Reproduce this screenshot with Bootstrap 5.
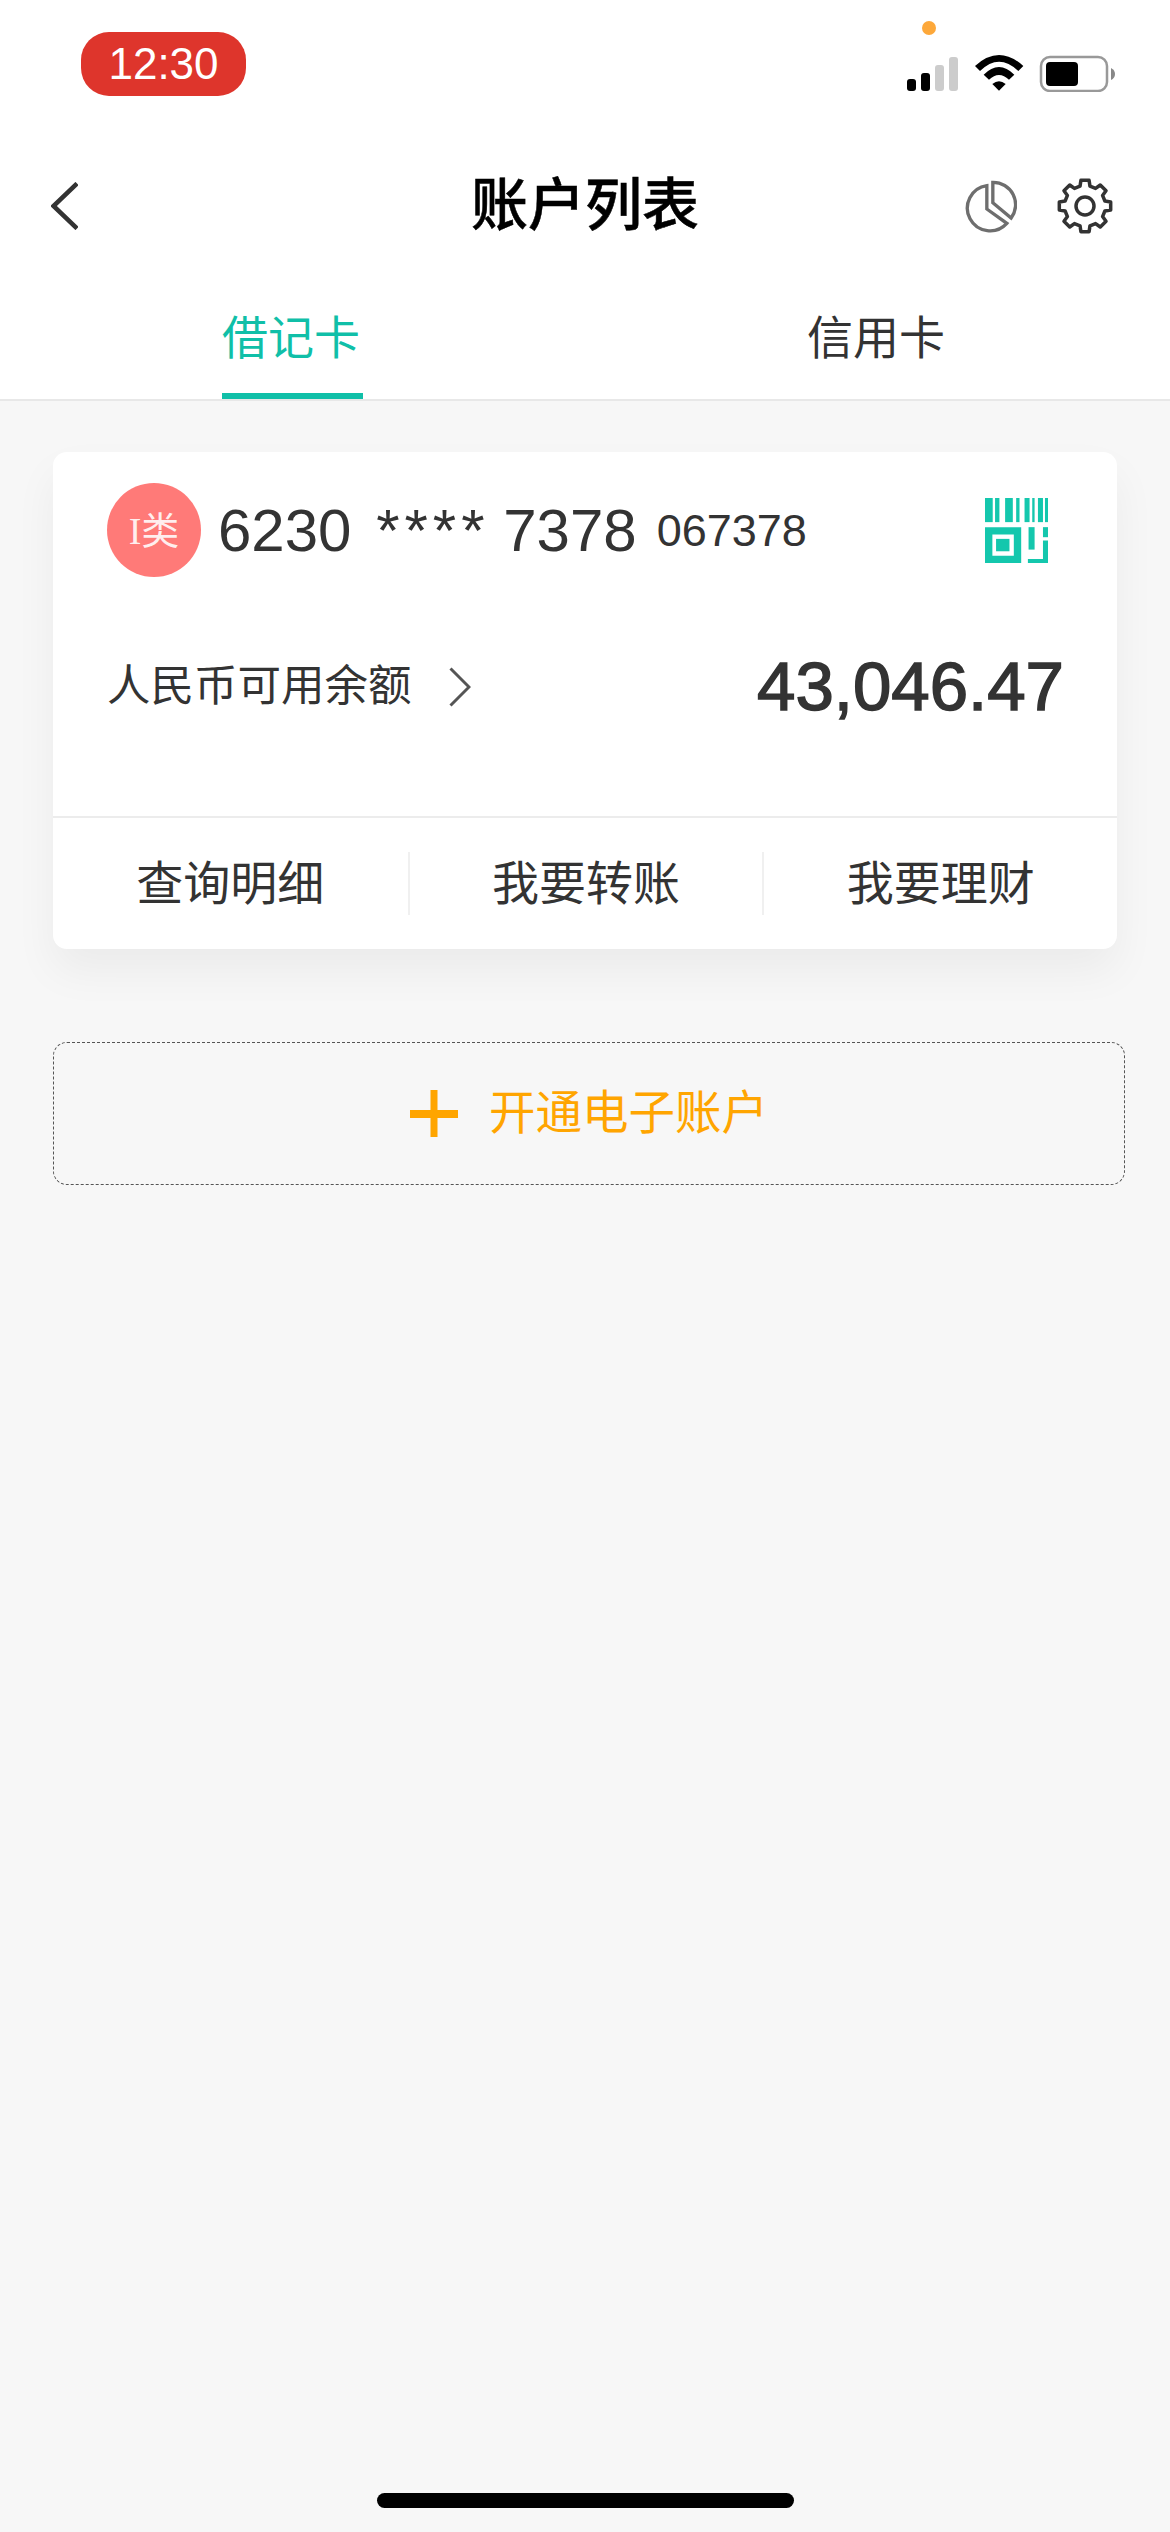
<!DOCTYPE html>
<html lang="zh-CN">
<head>
  <meta charset="UTF-8">
  <title>账户列表</title>
  <link rel="stylesheet" href="https://cdn.jsdelivr.net/npm/bootstrap@5.3.0/dist/css/bootstrap.min.css">
  <style>
    body {
      width: 1170px;
      min-height: 2532px;
      background: #f7f7f7;
      color: #333;
      font-family: "Liberation Sans", "Noto Sans CJK SC", sans-serif;
    }
    .page-wrap { min-height: 2532px; }

    /* 状态栏 */
    .status-bar { height: 112px; background: #fff; position: relative; }
    .time-pill {
      margin: 32px 0 0 81px;
      width: 165px;
      height: 64px;
      border-radius: 28px;
      background: #de352c;
      color: #fff;
      font-size: 44px;
      line-height: 64px;
      text-align: center;
    }
    .status-icons { margin: 55px 55px 0 0; width: 208px; height: 37px; }
    .mic-dot {
      position: absolute;
      left: 922px;
      top: 21px;
      width: 14px;
      height: 14px;
      border-radius: 50%;
      background: #fda83a;
    }

    /* 标题栏 */
    .title-bar { height: 182px; background: #fff; padding: 6px 57px 0 51px; position: relative; }
    .title-text {
      position: absolute;
      left: 0;
      right: 0;
      top: 2px;
      line-height: 182px;
      text-align: center;
      font-size: 57px;
      font-weight: 500;
      color: #000;
      margin: 0;
      -webkit-text-stroke: .5px #000;
    }
    .title-icons { gap: 40px; }

    /* 标签 */
    .tab-bar { height: 107px; background: #fff; border-bottom: 2px solid #e8e8e8; }
    .tab-bar .nav-link {
      height: 105px;
      padding: 18px 0 0;
      font-size: 46px;
      line-height: 52px;
      color: #333;
    }
    .tab-label { display: inline-block; height: 87px; padding-right: 3px; }
    .tab-bar .active .tab-label {
      color: #10bfa8;
      border-bottom: 6px solid #10bfa8;
    }

    /* 卡片 */
    .acct-card {
      margin: 51px 53px 0 53px;
      border: 0;
      border-radius: 14px;
      box-shadow: 0 22px 44px rgba(0, 0, 0, .05);
    }
    .acct-top { height: 366px; padding: 31px 53px 0 54px; border-bottom: 2px solid #ececec; }
    .type-badge {
      width: 94px;
      height: 94px;
      padding-top: 3px;
      border-radius: 50%;
      background: #ff7a78;
      color: rgba(255, 255, 255, .88);
      font-size: 38px;
      font-family: "Liberation Serif", "Noto Sans CJK SC", serif;
    }
    .card-no { font-size: 60px; line-height: 70px; margin: 2px 0 0 17px; word-spacing: 8px; }
    .card-no-stars { letter-spacing: 5px; margin-right: -11px; }
    .card-sub { font-size: 45px; margin: 2px 0 0 20px; }
    .qr-icon { margin-right: 16px; }
    .balance-row { margin-top: 70px; height: 80px; }
    .balance-label { font-size: 43.5px; }
    .balance-arrow { margin-left: 37px; }
    .balance-num { font-size: 69px; line-height: 80px; -webkit-text-stroke: 1.5px #333; }
    .acct-actions { height: 131px; }
    .acct-action { font-size: 47px; line-height: 63px; text-align: center; }
    .acct-action + .acct-action { border-left: 2px solid #f0f0f0; }

    /* 开通 */
    .open-box {
      margin: 93px 45px 0 53px;
      height: 143px;
      border: 1px dashed #555;
      border-radius: 14px;
      font-size: 46.5px;
      color: #ffa500;
      gap: 31px;
    }

    .home-bar {
      width: 417px;
      height: 15px;
      border-radius: 8px;
      background: #000;
      margin: auto auto 24px;
    }
  </style>
</head>
<body>
  <div class="page-wrap d-flex flex-column">

    <div class="status-bar d-flex justify-content-between align-items-start">
      <div class="time-pill">12:30</div>
      <span class="mic-dot"></span>
      <svg class="status-icons" viewBox="0 0 208 37">
        <rect x="0" y="24" width="9" height="12" rx="3" fill="#000"/>
        <rect x="14" y="18" width="9" height="18" rx="3" fill="#000"/>
        <rect x="28" y="10" width="9" height="26" rx="3" fill="#ccc"/>
        <rect x="42" y="2" width="9" height="34" rx="3" fill="#ccc"/>
        <g transform="translate(68 0) scale(.3333) translate(-285 -165)" fill="#000">
          <path d="M285 198Q357 132 430 198L415 213Q357 157 300 213Z"/>
          <path d="M311 224Q357 178 403 224L387 239Q357 211 327 239Z"/>
          <path d="M337 252Q357 235 377 252L357 272Z"/>
        </g>
        <rect x="134" y="2" width="66" height="34" rx="9" fill="none" stroke="#999" stroke-width="2.5"/>
        <rect x="139" y="7" width="32" height="24" rx="4" fill="#000"/>
        <path d="M204 13q4 2 4 6t-4 6z" fill="#888"/>
      </svg>
    </div>

    <div class="title-bar d-flex justify-content-between align-items-center">
      <svg width="27" height="48" viewBox="0 0 27 48" class="position-relative">
        <path d="M26 1.5L2.5 24L26 46.5" fill="none" stroke="#333" stroke-width="4.5"/>
      </svg>
      <h1 class="title-text">账户列表</h1>
      <div class="title-icons d-flex align-items-center position-relative">
        <svg width="52" height="55" viewBox="260 535 155 165">
          <g fill="none" stroke="#6e6e6e" stroke-width="10">
            <path d="M325 555A68 68 0 1 0 385 668L325 625Z"/>
            <path d="M343 545A67 67 0 0 1 398 652L343 606Z"/>
          </g>
        </svg>
        <svg width="56" height="56" viewBox="-28 -28 56 56">
          <polygon fill="none" stroke="#333" stroke-width="3.5" stroke-linejoin="round"
            points="-4.07,-25.68 4.07,-25.68 4.96,-19.89 10.56,-17.57 15.28,-21.03 21.03,-15.28 17.57,-10.56 19.89,-4.96 25.68,-4.07 25.68,4.07 19.89,4.96 17.57,10.56 21.03,15.28 15.28,21.03 10.56,17.57 4.96,19.89 4.07,25.68 -4.07,25.68 -4.96,19.89 -10.56,17.57 -15.28,21.03 -21.03,15.28 -17.57,10.56 -19.89,4.96 -25.68,4.07 -25.68,-4.07 -19.89,-4.96 -17.57,-10.56 -21.03,-15.28 -15.28,-21.03 -10.56,-17.57 -4.96,-19.89"/>
          <circle r="9" fill="none" stroke="#333" stroke-width="3.5"/>
        </svg>
      </div>
    </div>

    <ul class="tab-bar nav nav-fill">
      <li class="nav-item"><a class="nav-link active" href="#"><span class="tab-label">借记卡</span></a></li>
      <li class="nav-item"><a class="nav-link" href="#"><span class="tab-label">信用卡</span></a></li>
    </ul>

    <!-- 账户卡片 -->
    <div class="card acct-card">
      <div class="acct-top">
        <div class="d-flex align-items-center">
          <div class="type-badge d-flex align-items-center justify-content-center">I类</div>
          <div class="card-no">6230 <span class="card-no-stars">****</span> 7378</div>
          <div class="card-sub">067378</div>
          <svg class="qr-icon ms-auto" width="63" height="65" viewBox="77 53 188 194" fill="#14c7ad">
            <rect x="77" y="53" width="23" height="72"/>
            <rect x="107" y="53" width="13" height="72"/>
            <rect x="137" y="53" width="23" height="72"/>
            <rect x="170" y="53" width="10" height="72"/>
            <rect x="195" y="53" width="15" height="72"/>
            <rect x="218" y="53" width="7" height="72"/>
            <rect x="235" y="53" width="15" height="72"/>
            <rect x="256" y="53" width="9" height="72"/>
            <path fill-rule="evenodd" d="M77 140H185V247H77ZM99 162V225H163V162Z"/>
            <rect x="110" y="175" width="40" height="37"/>
            <rect x="207" y="140" width="18" height="67"/>
            <rect x="250" y="140" width="15" height="30"/>
            <path d="M250 180H265V247H205V235H250Z"/>
          </svg>
        </div>
        <div class="balance-row d-flex align-items-center justify-content-between">
          <div class="d-flex align-items-center">
            <span class="balance-label">人民币可用余额</span>
            <svg class="balance-arrow" width="22" height="40" viewBox="0 0 22 40">
              <path d="M1.5 1.5L20 20L1.5 38.5" fill="none" stroke="#555" stroke-width="3"/>
            </svg>
          </div>
          <div class="balance-num">43,046.47</div>
        </div>
      </div>
      <div class="acct-actions row g-0 align-items-center">
        <div class="col-4 acct-action">查询明细</div>
        <div class="col-4 acct-action">我要转账</div>
        <div class="col-4 acct-action">我要理财</div>
      </div>
    </div>

    <div class="open-box d-flex align-items-center justify-content-center">
      <svg width="48" height="47" viewBox="0 0 48 47" fill="#ffa500">
        <rect x="0" y="20" width="48" height="8"/>
        <rect x="20.5" y="0" width="7" height="47"/>
      </svg>
      <span>开通电子账户</span>
    </div>

    <div class="home-bar"></div>
  </div>
  <script src="https://cdn.jsdelivr.net/npm/bootstrap@5.3.0/dist/js/bootstrap.bundle.min.js"></script>
</body>
</html>
